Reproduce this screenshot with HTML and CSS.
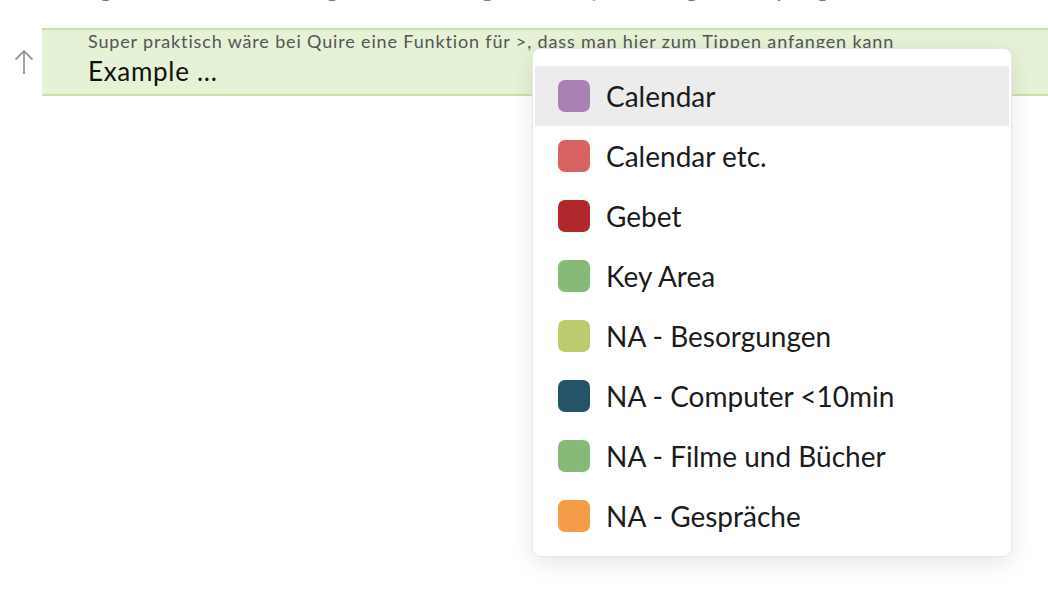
FILE: index.html
```html
<!DOCTYPE html>
<html lang="de">
<head>
<meta charset="utf-8">
<link rel="stylesheet" href="styles.css">
</head>
<body>
<div class="page">
  <div class="prev-line">Es wäre gut, wenn man damit ganz leicht Aufgaben in Quire anlegen und pflegen könnte, so wie in Quire selbst</div>
  <div class="row">
    <div class="gutter">
      <svg class="arrow" width="22" height="28" viewBox="0 0 22 28"><path d="M11 26V3M2.5 11.5L11 3l8.5 8.5" fill="none" stroke="#9a9a9a" stroke-width="1.8"/></svg>
    </div>
    <div class="bar">
      <div class="note">Super praktisch wäre bei Quire eine Funktion für &gt;, dass man hier zum Tippen anfangen kann</div>
      <div class="title">Example ...</div>
    </div>
  </div>
  <div class="menu">
    <div class="item active"><span class="sw" style="background:#ab80b2"></span>Calendar</div>
    <div class="item"><span class="sw" style="background:#d96262"></span>Calendar etc.</div>
    <div class="item"><span class="sw" style="background:#b0282b"></span>Gebet</div>
    <div class="item"><span class="sw" style="background:#87ba78"></span>Key Area</div>
    <div class="item"><span class="sw" style="background:#bdcb70"></span>NA - Besorgungen</div>
    <div class="item"><span class="sw" style="background:#255467"></span>NA - Computer &lt;10min</div>
    <div class="item"><span class="sw" style="background:#87ba78"></span>NA - Filme und Bücher</div>
    <div class="item"><span class="sw" style="background:#f49c48"></span>NA - Gespräche</div>
  </div>
</div>
</body>
</html>
```
FILE: styles.css
```css
html, body {
  margin: 0;
  padding: 0;
  background: #fff;
  font-family: Lato, "Open Sans", sans-serif;
  overflow: hidden;
}
.page {
  position: relative;
  width: 1048px;
  height: 596px;
  overflow: hidden;
}
.prev-line {
  margin-top: -24px;
  height: 24px;
  line-height: 24px;
  font-size: 24px;
  color: #777;
  white-space: nowrap;
  padding-left: 12px;
}
.row {
  display: flex;
  margin-top: 28px;
}
.gutter {
  width: 42px;
  flex: none;
}
.arrow {
  display: block;
  margin: 20px 0 0 13px;
}
.bar {
  flex: 1;
  background: #e6f2d6;
  border-top: 2px solid #c9e0ad;
  border-bottom: 2px solid #c9e0ad;
  padding: 2px 0 8px 46px;
}
.note {
  font-size: 18px;
  line-height: 19px;
  letter-spacing: 0.85px;
  color: #555;
  white-space: nowrap;
}
.title {
  margin-top: 5px;
  font-size: 26px;
  line-height: 30px;
  letter-spacing: 0.7px;
  color: #111;
}
.menu {
  position: absolute;
  left: 532px;
  top: 48px;
  width: 480px;
  height: 509px;
  box-sizing: border-box;
  background: #fff;
  border: 1px solid #e6e6e6;
  border-radius: 8px;
  box-shadow: 0 6px 22px rgba(0,0,0,0.10);
  padding: 17px 2px 10px 2px;
}
.item {
  display: flex;
  align-items: center;
  gap: 16px;
  height: 60px;
  padding-left: 23px;
  font-size: 28px;
  color: #1b1b1b;
  white-space: nowrap;
}
.item.active {
  background: #ececec;
}
.sw {
  width: 32px;
  height: 32px;
  border-radius: 7px;
  flex: none;
}
```
